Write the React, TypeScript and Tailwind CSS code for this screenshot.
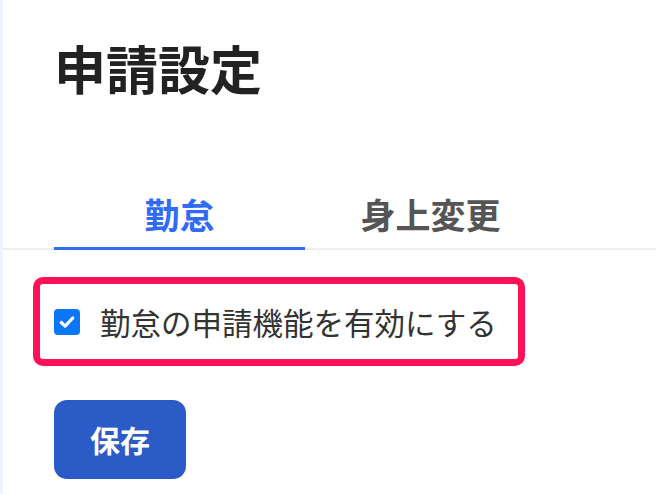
import React from "react";

export default function App() {
  const font = { fontFamily: '"Noto Sans CJK JP", "Noto Sans", sans-serif' };
  return (
    <div className="flex min-h-[494px] w-[656px] overflow-hidden bg-white" style={font}>
      <div className="w-[3px] shrink-0 bg-[#eef4fd]" />
      <div className="flex-1">
        <h1 className="pl-[51px] pt-[33px] text-[52px] font-bold leading-[70px] text-[#222]">申請設定</h1>
        <div className="mt-[89px] flex border-b-2 border-[#eeeeee] pl-[51px]">
          <div className="-mb-[2px] w-[251px] border-b-[3px] border-[#2f6bf5] pb-[11px] text-center text-[35px] font-bold leading-[44px] text-[#2f6bf5]">
            勤怠
          </div>
          <div className="-mb-[2px] w-[251px] pb-[11px] text-center text-[35px] font-bold leading-[44px] text-[#555]">
            身上変更
          </div>
        </div>
        <div className="ml-[30px] mt-[27px] flex h-[89px] w-[492px] items-center rounded-[10px] border-[7px] border-[#ff1157] pl-[14px]">
          <span className="flex h-[26px] w-[26px] items-center justify-center rounded-[4px] bg-[#0b76f6]">
            <svg width="20" height="20" viewBox="0 0 16 16" fill="none">
              <path d="M3.4 8.4 L6.5 11.3 L12.6 4.8" stroke="#fff" strokeWidth="2.6" strokeLinecap="round" strokeLinejoin="round" />
            </svg>
          </span>
          <span className="ml-[20px] text-[30.5px] leading-[40px] text-[#333]">勤怠の申請機能を有効にする</span>
        </div>
        <button className="ml-[51px] mt-[34px] flex h-[79px] w-[132px] items-center justify-center rounded-[13px] bg-[#2a5bc7] text-[30px] font-bold text-white">
          保存
        </button>
      </div>
    </div>
  );
}
